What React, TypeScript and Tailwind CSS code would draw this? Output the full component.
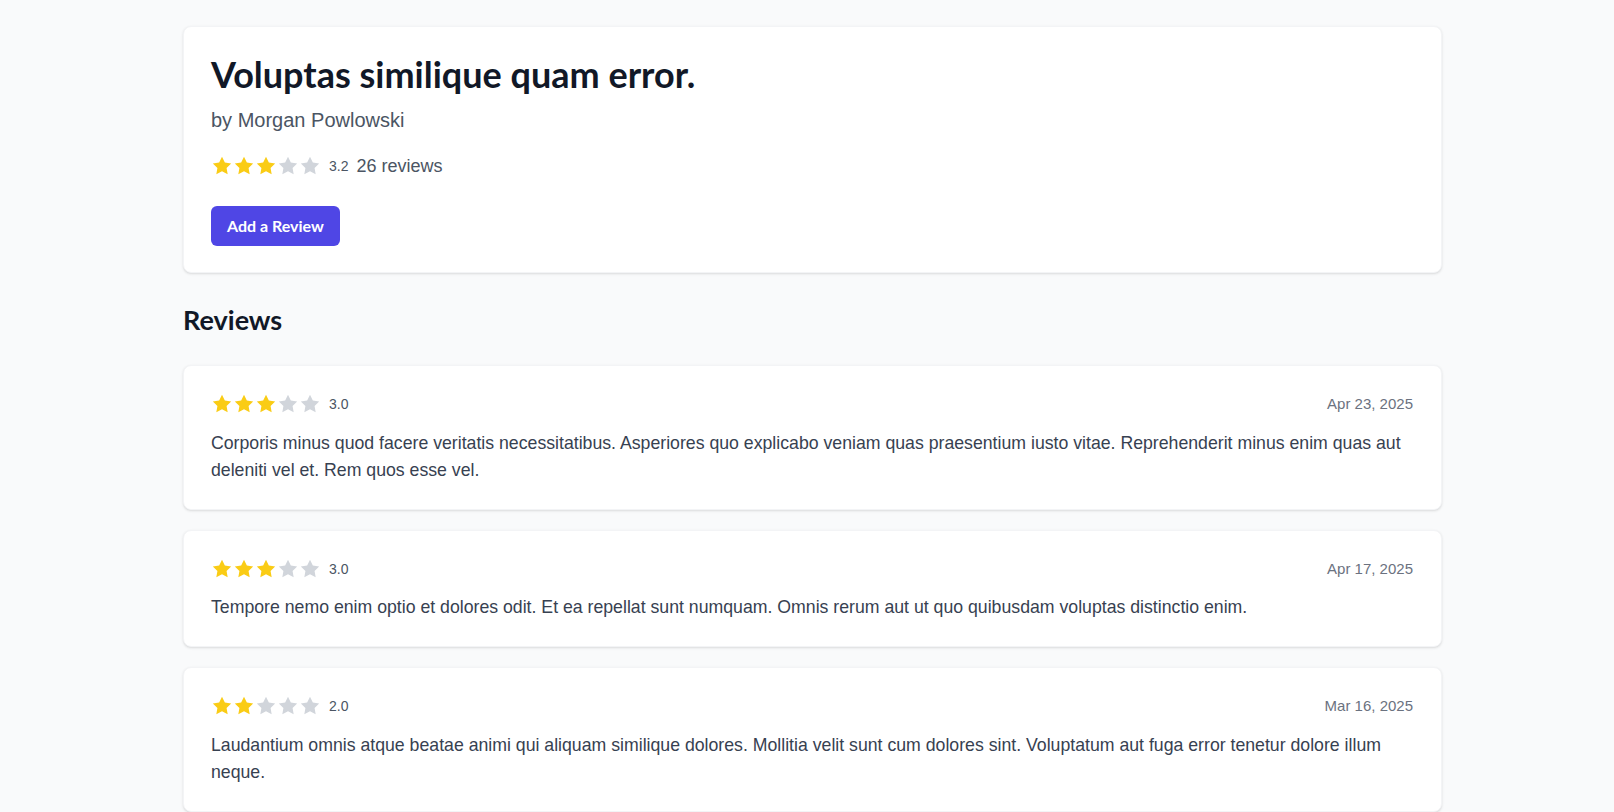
const reviews = [
  {
    rating: 3,
    date: 'Apr 23, 2025',
    body: 'Corporis minus quod facere veritatis necessitatibus. Asperiores quo explicabo veniam quas praesentium iusto vitae. Reprehenderit minus enim quas aut deleniti vel et. Rem quos esse vel.',
  },
  {
    rating: 3,
    date: 'Apr 17, 2025',
    body: 'Tempore nemo enim optio et dolores odit. Et ea repellat sunt numquam. Omnis rerum aut ut quo quibusdam voluptas distinctio enim.',
  },
  {
    rating: 2,
    date: 'Mar 16, 2025',
    body: 'Laudantium omnis atque beatae animi qui aliquam similique dolores. Mollitia velit sunt cum dolores sint. Voluptatum aut fuga error tenetur dolore illum neque.',
  },
];

function Star({ filled }: { filled: boolean }) {
  return (
    <svg viewBox="0 0 24 24" className={filled ? 'h-[22px] w-[22px] text-[#facc15]' : 'h-[22px] w-[22px] text-[#d1d5db]'}>
      <polygon
        fill="currentColor"
        points="12,2 15.09,8.26 22,9.27 17,14.14 18.18,21.02 12,17.77 5.82,21.02 7,14.14 2,9.27 8.91,8.26"
      />
    </svg>
  );
}

function Stars({ value }: { value: number }) {
  return (
    <div className="flex items-center">
      {[1, 2, 3, 4, 5].map((i) => (
        <Star key={i} filled={i <= Math.round(value)} />
      ))}
    </div>
  );
}

export default function App() {
  return (
    <div className="min-h-screen bg-[#f9fafb] font-['Liberation_Sans',Arial,sans-serif]">
      <div className="ml-[183px] w-[1259px] pt-[26px] pb-10">
        {/* Book header */}
        <div className="rounded-lg border border-[#f3f4f6] bg-white pt-[27px] pr-7 pb-[26px] pl-[27px] shadow-sm">
          <h1 className="font-['Lato',sans-serif] text-4xl font-bold text-[#111827]">Voluptas similique quam error.</h1>
          <p className="mt-3 text-xl text-[#4b5563]">by Morgan Powlowski</p>
          <div className="mt-[18px] flex h-7 items-center">
            <Stars value={3.2} />
            <span className="ml-2 text-sm text-[#4b5563]">3.2</span>
            <span className="ml-2 text-lg text-[#4b5563]">26 reviews</span>
          </div>
          <button className="mt-[26px] h-10 rounded-md bg-[#4f46e5] px-4 font-['Lato',sans-serif] text-base font-bold text-white">
            Add a Review
          </button>
        </div>

        {/* Reviews */}
        <h2 className="mt-[29px] mb-[27px] font-['Lato',sans-serif] text-[27px] leading-9 font-bold text-[#111827]">Reviews</h2>
        <div className="flex flex-col gap-5">
          {reviews.map((r, idx) => (
            <div key={idx} className="rounded-lg border border-[#f3f4f6] bg-white pt-[27px] pr-7 pb-[25px] pl-[27px] shadow-sm">
              <div className="flex items-center justify-between">
                <div className="flex items-center">
                  <Stars value={r.rating} />
                  <span className="ml-2 text-sm text-[#4b5563]">{r.rating.toFixed(1)}</span>
                </div>
                <span className="text-[15px] text-[#6b7280]">{r.date}</span>
              </div>
              <p className="mt-[14px] text-[17.7px] leading-[27px] text-[#374151]">{r.body}</p>
            </div>
          ))}
        </div>
      </div>
    </div>
  );
}
